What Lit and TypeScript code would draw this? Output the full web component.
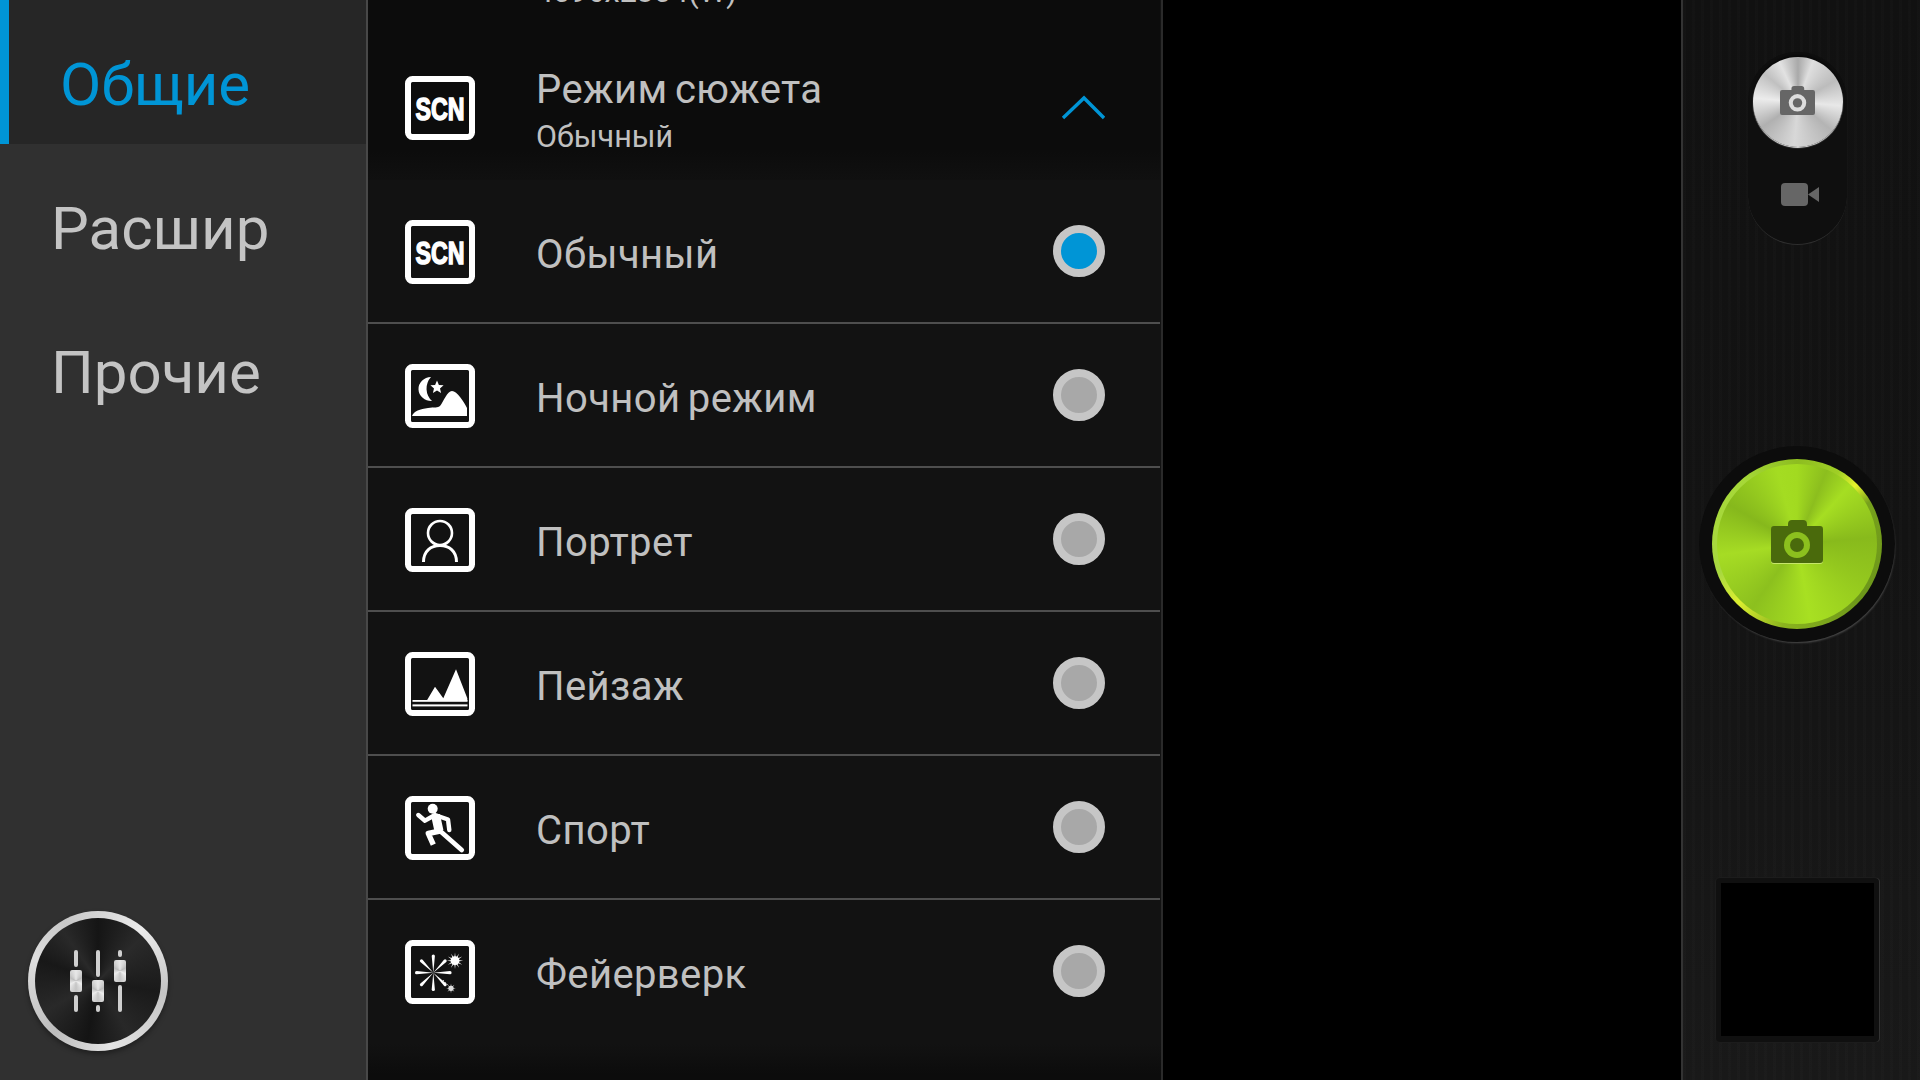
import { LitElement, html, css, svg } from "lit";
import { customElement } from "lit/decorators.js";

const frame = svg`<rect x="3" y="3" width="64" height="58" rx="4.5" fill="none" stroke="#fff" stroke-width="6"/>`;

const scn = svg`<text class="scn" x="35" y="43.5" text-anchor="middle" textLength="49" lengthAdjust="spacingAndGlyphs">SCN</text>`;

const night = svg`
  <path d="M26 13 A13 12 0 0 0 27 37 A17 17 0 0 1 26 13Z" fill="#fff"/>
  <path d="M32 16.5l1.9 4.4 4.7.4-3.6 3.1 1.1 4.6-4.1-2.4-4.1 2.4 1.1-4.6-3.6-3.1 4.7-.4Z" fill="#fff"/>
  <path d="M7 52 C9 47 15 45 23 44 C29 43 33 44 35 42 C39 37 42 27 47 27 C52 27 59 38 62 44 L62 52Z" fill="#fff"/>`;

const portrait = svg`
  <circle cx="35" cy="25" r="12" fill="none" stroke="#fff" stroke-width="2.6"/>
  <path d="M18.5 54 C18.5 43 26 37.5 35 37.5 C44 37.5 51.5 43 51.5 54" fill="none" stroke="#fff" stroke-width="3"/>`;

const landscape = svg`
  <path d="M21.7 48.7 L30 34.7 L38.3 46.3 L51 17.3 L62.3 46.3 V48.7Z" fill="#fff"/>
  <rect x="7.5" y="48" width="55" height="1.8" fill="#fff"/>
  <rect x="7.5" y="52.4" width="55" height="2" fill="#fff"/>`;

const sport = svg`
  <circle cx="27.7" cy="12.7" r="5" fill="#fff"/>
  <path d="M13.3 19 L20 24.7 L30 19 L43 23.5 L44.3 34" fill="none" stroke="#fff" stroke-width="4.4" stroke-linejoin="round" stroke-linecap="round"/>
  <path d="M30.5 19 L34 35" fill="none" stroke="#fff" stroke-width="9"/>
  <path d="M34 34 L56.7 54" fill="none" stroke="#fff" stroke-width="4.8" stroke-linecap="round"/>
  <path d="M35 35 L23.3 37.5 L28.3 48.7" fill="none" stroke="#fff" stroke-width="5.4" stroke-linejoin="round"/>`;

const rays = [0, 45, 90, 135, 180, 225, 270, 315];
const spark = [0, 30, 60, 90, 120, 150, 180, 210, 240, 270, 300, 330];
const fireworks = svg`
  ${rays.map(
    (a) => svg`<path d="M28.3 32.7 L26.7 16 A1.6 1.6 0 0 1 29.9 16Z" fill="#fff" transform="rotate(${a} 28.3 32.7)"/>`
  )}
  <circle cx="50" cy="20.7" r="4.4" fill="#fff"/>
  ${spark.map(
    (a) => svg`<path d="M48.9 20.7 L50 12.5 L51.1 20.7Z" fill="#fff" transform="rotate(${a} 50 20.7)"/>`
  )}
  <circle cx="46" cy="48.3" r="2.6" fill="#ddd"/>
  ${rays.map(
    (a) => svg`<path d="M45.2 48.3 L46 43.4 L46.8 48.3Z" fill="#ddd" transform="rotate(${a} 46 48.3)"/>`
  )}
  <path d="M38 40 L43 45" stroke="#bbb" stroke-width="1" stroke-dasharray="1.5 1.5"/>`;

const items = [
  { label: "Обычный", icon: scn, on: true },
  { label: "Ночной режим", icon: night, on: false },
  { label: "Портрет", icon: portrait, on: false },
  { label: "Пейзаж", icon: landscape, on: false },
  { label: "Спорт", icon: sport, on: false },
  { label: "Фейерверк", icon: fireworks, on: false },
];

const sliders = [
  { top: 17, bottom: 17 },
  { top: 27, bottom: 7 },
  { top: 7, bottom: 27 },
];

const camPath =
  "M17 4 Q17 0 21 0 H32 Q36 0 36 4 V6 H49 Q52 6 52 9 V40 Q52 43 49 43 H3 Q0 43 0 40 V9 Q0 6 3 6 H17Z";

@customElement("app-root")
export class AppRoot extends LitElement {
  static styles = css`
    :host {
      display: flex;
      width: 1920px;
      height: 1080px;
      overflow: hidden;
      background: #000;
      font-family: Roboto, "Liberation Sans", sans-serif;
    }
    .side {
      width: 368px;
      box-sizing: border-box;
      border-right: 2px solid #484848;
      background: #303030;
      display: flex;
      flex-direction: column;
      flex: none;
    }
    .tab {
      height: 144px;
      display: flex;
      align-items: center;
      padding: 24px 0 0 51px;
      font-size: 60px;
      color: #c4c4c4;
      box-sizing: border-box;
    }
    .tab.active {
      background: #262626;
      border-left: 9px solid #0095d6;
      padding-left: 51px;
      color: #0095d6;
    }
    .knob {
      margin: auto 0 29px 28px;
      width: 140px;
      height: 140px;
      box-sizing: border-box;
      border-radius: 50%;
      padding: 7px;
      background: conic-gradient(#d4d4d4, #ececec 40deg, #c4c4c4 100deg, #e4e4e4 170deg, #bdbdbd 220deg, #dedede 290deg, #c8c8c8 330deg, #d4d4d4);
      box-shadow: 0 3px 5px rgba(0, 0, 0, 0.35);
    }
    .knob-in {
      width: 100%;
      height: 100%;
      border-radius: 50%;
      background: conic-gradient(#151515, #2a2a2a 45deg, #1a1a1a 100deg, #282828 150deg, #141414 190deg, #292929 240deg, #181818 290deg, #292929 325deg, #151515);
      display: flex;
      justify-content: center;
      align-items: center;
      gap: 10px;
    }
    .slider {
      width: 12px;
      display: flex;
      flex-direction: column;
      align-items: center;
      gap: 3px;
    }
    .track {
      width: 4px;
      border-radius: 2px;
      background: #cfcfcf;
    }
    .handle {
      width: 12px;
      height: 22px;
      border-radius: 2px;
      background: conic-gradient(#e8e8e8, #bcbcbc 60deg, #efefef 120deg, #c4c4c4 180deg, #ececec 240deg, #bdbdbd 300deg, #e8e8e8);
    }
    .list {
      width: 795px;
      flex: none;
      box-sizing: border-box;
      border-right: 2px solid #2a2a2a;
      background: #121212;
      display: flex;
      flex-direction: column;
    }
    .row {
      height: 144px;
      flex: none;
      box-sizing: border-box;
      display: flex;
      align-items: center;
      padding-left: 37px;
      padding-right: 55px;
      margin-right: 1px;
      color: #c0c0c0;
    }
    .row.sep {
      border-bottom: 2px solid #4e4e4e;
      padding-top: 2px;
    }
    .row.dark {
      background: linear-gradient(#0c0c0c 80%, #101010);
    }
    .row.ghost {
      height: 36px;
      align-items: flex-start;
      background: #0c0c0c;
    }
    .icon {
      width: 70px;
      height: 64px;
      flex: none;
      display: block;
    }
    .scn {
      font-family: "Liberation Sans", sans-serif;
      font-weight: 700;
      font-size: 31px;
      fill: #fff;
      stroke: #fff;
      stroke-width: 1.5px;
    }
    .txt {
      margin-left: 61px;
      flex: 1;
      display: flex;
      flex-direction: column;
      justify-content: center;
      padding-top: 4px;
    }
    .title {
      font-size: 40px;
      line-height: 47px;
      letter-spacing: 0.4px;
      word-spacing: -3px;
    }
    .sub {
      font-size: 30.5px;
      line-height: 36px;
      margin-top: 6px;
    }
    .ghost-sub {
      margin: -26px 0 0 131px;
      font-size: 30.5px;
      line-height: 36px;
    }
    .chev {
      width: 44px;
      height: 26px;
      flex: none;
    }
    .radio {
      width: 52px;
      height: 52px;
      box-sizing: border-box;
      flex: none;
      border-radius: 50%;
      border: 8px solid #c6c6c6;
      background: #a8a8a8;
      margin-top: -2px;
    }
    .radio.on {
      background: #0095d6;
    }
    .rest {
      flex: 1;
      background: linear-gradient(#121212, #0c0c0c 30px);
    }
    .view {
      flex: 1;
      background: #000;
    }
    .bar {
      width: 239px;
      flex: none;
      box-sizing: border-box;
      border-left: 2px solid #333;
      padding: 52px 8px 0 0;
      display: flex;
      flex-direction: column;
      align-items: center;
      background: repeating-linear-gradient(90deg, rgba(255, 255, 255, 0.012) 0 3px, transparent 3px 9px),
        linear-gradient(#111, #131313 50%, #191919);
    }
    .pill {
      width: 99px;
      height: 193px;
      box-sizing: border-box;
      border-radius: 50px;
      background: #0f0f0f;
      border-bottom: 1px solid #2e2e2e;
      display: flex;
      flex-direction: column;
      align-items: center;
      padding-top: 5px;
      flex: none;
    }
    .silver {
      width: 90px;
      height: 90px;
      flex: none;
      border-radius: 50%;
      display: flex;
      align-items: center;
      justify-content: center;
      background: conic-gradient(#a9a9a9, #dedede 20deg, #bcbcbc 60deg, #e8e8e8 95deg, #b4b4b4 130deg, #d8d8d8 185deg, #b0b0b0 235deg, #ececec 275deg, #c0c0c0 310deg, #e2e2e2 335deg, #a9a9a9);
      box-shadow: 0 -2px 3px rgba(0, 0, 0, 0.5), 0 1px 1px #eee;
    }
    .cam-s {
      width: 35px;
      height: 29px;
      margin-top: -3px;
      display: block;
    }
    .vid {
      width: 38px;
      height: 23px;
      margin: 36px 0 0 4px;
      display: block;
    }
    .ring {
      margin: 201px 2px 0 0;
      width: 196px;
      height: 196px;
      flex: none;
      box-sizing: border-box;
      border-radius: 50%;
      background: #0c0c0c;
      box-shadow: 1px 2px 2px -1px #4a4a4a;
      display: flex;
      align-items: center;
      justify-content: center;
    }
    .rim {
      width: 170px;
      height: 170px;
      border-radius: 50%;
      display: flex;
      align-items: center;
      justify-content: center;
      background: conic-gradient(#8dbd20, #a0cf26 30deg, #e6f32c 45deg, #76a01c 60deg, #6c961a 130deg, #8ab41e 190deg, #dcee30 225deg, #a8d840 250deg, #a6d838 320deg, #8dbd20);
    }
    .disc {
      width: 160px;
      height: 160px;
      border-radius: 50%;
      display: flex;
      align-items: center;
      justify-content: center;
      background: conic-gradient(#a2da20, #8cbe1e 22deg, #a6de22 42deg, #88ba1c 85deg, #94c81e 120deg, #a8e022 170deg, #8cc01e 215deg, #a6dc24 262deg, #86b81c 300deg, #a4dc22 345deg, #a2da20);
    }
    .cam-g {
      width: 52px;
      height: 44px;
      margin-top: -4px;
      display: block;
    }
    .thumb {
      margin-top: 236px;
      width: 163px;
      height: 164px;
      flex: none;
      box-sizing: border-box;
      border: 5px solid #101010;
      border-bottom-width: 6px;
      border-radius: 4px;
      background: #000;
      box-shadow: 1px 0 0 #333, 0 0 0 1px #1c1c1c;
    }
  `;

  private row(it: { label: string; icon: unknown; on: boolean }, sep: boolean) {
    return html`<div class="row ${sep ? "sep" : ""}">
      <svg class="icon" viewBox="0 0 70 64">${frame}${it.icon}</svg>
      <div class="txt"><div class="title">${it.label}</div></div>
      <div class="radio ${it.on ? "on" : ""}"></div>
    </div>`;
  }

  render() {
    return html`
      <div class="side">
        <div class="tab active">Общие</div>
        <div class="tab">Расшир</div>
        <div class="tab">Прочие</div>
        <div class="knob">
          <div class="knob-in">
            ${sliders.map(
              (s) => html`<div class="slider">
                <div class="track" style="height:${s.top}px"></div>
                <div class="handle"></div>
                <div class="track" style="height:${s.bottom}px"></div>
              </div>`
            )}
          </div>
        </div>
      </div>
      <div class="list">
        <div class="row ghost">
          <div class="ghost-sub">4096x2304(W)</div>
        </div>
        <div class="row dark">
          <svg class="icon" viewBox="0 0 70 64">${frame}${scn}</svg>
          <div class="txt">
            <div class="title">Режим сюжета</div>
            <div class="sub">Обычный</div>
          </div>
          <svg class="chev" viewBox="0 0 44 26">
            <path d="M2 23 L23 3 L43 23" fill="none" stroke="#0095d6" stroke-width="3.4"/>
          </svg>
        </div>
        ${items.map((it, i) => this.row(it, i < items.length - 1))}
        <div class="rest"></div>
      </div>
      <div class="view"></div>
      <div class="bar">
        <div class="pill">
          <div class="silver">
            <svg class="cam-s" viewBox="0 0 52 43">
              <path d=${camPath} fill="#666"/>
              <circle cx="26" cy="25" r="13" fill="#ddd"/>
              <circle cx="26" cy="25" r="7" fill="#666"/>
            </svg>
          </div>
          <svg class="vid" viewBox="0 0 38 23">
            <rect width="27" height="23" rx="4" fill="#666"/>
            <path d="M27 11.5 L38 4 V19Z" fill="#666"/>
          </svg>
        </div>
        <div class="ring">
          <div class="rim">
            <div class="disc">
              <svg class="cam-g" viewBox="0 0 52 44">
                <path d=${camPath} transform="translate(0 1)" fill="#c6e66a"/>
                <path d=${camPath} fill="#4a6a0c"/>
                <circle cx="26" cy="25" r="13" fill="#8cc01e"/>
                <circle cx="26" cy="25" r="7" fill="#4a6a0c"/>
              </svg>
            </div>
          </div>
        </div>
        <div class="thumb"></div>
      </div>
    `;
  }
}
